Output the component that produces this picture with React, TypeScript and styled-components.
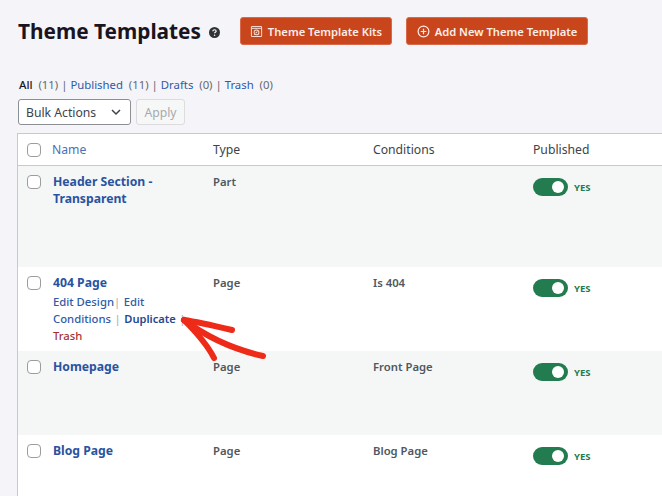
import React from 'react';
import styled, { createGlobalStyle } from 'styled-components';

const GlobalStyle = createGlobalStyle`
  html, body {
    margin: 0;
    padding: 0;
    overflow: hidden;
    background: #f5f4f8;
    font-family: "Noto Sans", "Open Sans", sans-serif;
  }
`;

const Page = styled.div`
  position: relative;
  width: 662px;
  height: 496px;
  overflow: hidden;
  padding-top: 17px;
  box-sizing: border-box;
`;

const Header = styled.div`
  display: flex;
  align-items: center;
  height: 28px;
  padding-left: 18px;
`;

const Title = styled.h1`
  margin: 0;
  width: 183px;
  white-space: nowrap;
  font-size: 20.8px;
  line-height: 28px;
  font-weight: 700;
  color: #1a1420;
`;

const Help = styled.svg`
  width: 11px;
  height: 11px;
  margin-left: 8px;
  margin-right: 20px;
  margin-top: 2px;
`;

const Button = styled.button<{ $width: number }>`
  display: flex;
  align-items: center;
  justify-content: center;
  gap: 5px;
  width: ${p => p.$width}px;
  height: 28px;
  margin-right: 14px;
  padding: 0;
  border: 1px solid #d9694a;
  border-radius: 3px;
  background: #c9451c;
  color: #fbeee9;
  font: 600 11.2px "Noto Sans", sans-serif;
  svg { width: 13px; height: 13px; flex: none; }
`;

const Filters = styled.div`
  display: flex;
  align-items: center;
  height: 18px;
  margin-top: 30px;
  padding-left: 19px;
  font-size: 11.35px;
  color: #646970;
  white-space: pre;
`;

const FilterLink = styled.span<{ $current?: boolean }>`
  color: ${p => (p.$current ? '#1a1420' : '#2f5aa8')};
  font-weight: ${p => (p.$current ? 500 : 400)};
`;

const Actions = styled.div`
  display: flex;
  gap: 5px;
  margin-top: 6px;
  padding-left: 18px;
`;

const BulkSelect = styled.div`
  display: flex;
  align-items: center;
  justify-content: space-between;
  box-sizing: border-box;
  width: 113px;
  height: 26px;
  padding: 0 8px 0 7px;
  background: #fff;
  border: 1px solid #8c8f94;
  border-radius: 3px;
  color: #3c434a;
  font-size: 12.2px;
  svg { width: 12px; height: 12px; }
`;

const Apply = styled.div`
  display: flex;
  align-items: center;
  justify-content: center;
  box-sizing: border-box;
  width: 49px;
  height: 26px;
  background: #f6f7f7;
  border: 1px solid #dcdcde;
  border-radius: 3px;
  color: #a7aaad;
  font-size: 12.2px;
`;

const Table = styled.div`
  margin-top: 8px;
  margin-left: 17px;
  width: 660px;
  background: #fff;
  border: 1px solid #c9c9cc;
  border-right: none;
`;

const Row = styled.div<{ $height: number; $tone?: 'head' | 'alt' | 'plain' }>`
  display: grid;
  grid-template-columns: 34px 161px 160px 160px 1fr;
  height: ${p => p.$height}px;
  box-sizing: border-box;
  background: ${p => (p.$tone === 'alt' ? '#f5f7f7' : '#fff')};
  border-bottom: ${p => (p.$tone === 'head' ? '1px solid #c9c9cc' : 'none')};
`;

const Cell = styled.div<{ $head?: boolean }>`
  padding-top: 7px;
  font-size: 11.3px;
  line-height: 17px;
  color: #50575e;
  font-weight: 600;
  ${p => p.$head && 'font-size: 12.2px; font-weight: 400; color: #3c434a;'}
`;

const CheckCell = styled.div`
  padding-top: 9px;
  padding-left: 9px;
`;

const Check = styled.div`
  width: 14px;
  height: 14px;
  box-sizing: border-box;
  border: 1px solid #9a9ca1;
  border-radius: 4px;
  background: #fff;
`;

const HeadName = styled.span`
  color: #4a6fb5;
  font-size: 12.2px;
`;

const NameCell = styled.div`
  padding: 7px 0 0 1px;
  box-sizing: border-box;
`;

const RowName = styled.div`
  width: 125px;
  font-size: 12.2px;
  line-height: 17px;
  font-weight: 700;
  color: #2a52a0;
`;

const RowActions = styled.div`
  margin-top: 2px;
  font-size: 11.3px;
  line-height: 17px;
  font-weight: 500;
  color: #2f5aa8;
`;

const ActionLine = styled.div`
  display: flex;
  gap: 3.5px;
  white-space: nowrap;
`;

const Sep = styled.span<{ $tight?: boolean }>`
  color: #a7aaad;
  font-weight: 400;
  margin-left: ${p => (p.$tight ? -3.5 : 0)}px;
`;

const Danger = styled.span`
  color: #a83232;
`;

const Dark = styled.span`
  color: #24488f;
  font-size: 11.1px;
  font-weight: 600;
`;

const ToggleCell = styled.div`
  display: flex;
  align-items: flex-start;
  gap: 6px;
  padding-top: 12px;
`;

const Toggle = styled.div`
  display: flex;
  justify-content: flex-end;
  align-items: center;
  box-sizing: border-box;
  width: 35px;
  height: 18px;
  padding-right: 4px;
  background: #237c4f;
  border-radius: 9px;
  &::after {
    content: '';
    width: 12px;
    height: 12px;
    border-radius: 50%;
    background: #fff;
  }
`;

const Yes = styled.span`
  font-size: 9.5px;
  line-height: 19px;
  font-weight: 700;
  color: #237c4f;
`;

const Arrow = styled.svg`
  position: absolute;
  left: 170px;
  top: 305px;
  width: 110px;
  height: 70px;
`;

const rows = [
  { name: 'Header Section - Transparent', type: 'Part', cond: '', h: 101, tone: 'alt' as const },
  { name: '404 Page', type: 'Page', cond: 'Is 404', h: 84, tone: 'plain' as const, actions: true },
  { name: 'Homepage', type: 'Page', cond: 'Front Page', h: 84, tone: 'alt' as const },
  { name: 'Blog Page', type: 'Page', cond: 'Blog Page', h: 84, tone: 'plain' as const },
];

export default function App() {
  return (
    <Page>
      <GlobalStyle />
      <Header>
        <Title>Theme Templates</Title>
        <Help viewBox="0 0 12 12">
          <circle cx="6" cy="6" r="6" fill="#2f3338" />
          <path d="M4.2 4.6c0-1 .8-1.6 1.8-1.6s1.8.6 1.8 1.5c0 1.2-1.7 1.2-1.7 2.4" fill="none" stroke="#fff" strokeWidth="1.3" />
          <circle cx="6.1" cy="9" r=".8" fill="#fff" />
        </Help>
        <Button $width={152}>
          <svg viewBox="0 0 14 14" fill="none" stroke="#f6d9cf" strokeWidth="1.1">
            <rect x="1.5" y="1.5" width="11" height="11" rx="1" />
            <path d="M1.5 3.6h11" />
            <circle cx="7" cy="8" r="2.6" />
            <path d="M6 9l2-2" />
          </svg>
          Theme Template Kits
        </Button>
        <Button $width={182}>
          <svg viewBox="0 0 14 14" fill="none" stroke="#fbeee9" strokeWidth="1.3">
            <circle cx="7" cy="7" r="5.8" />
            <path d="M7 4v6M4 7h6" />
          </svg>
          Add New Theme Template
        </Button>
      </Header>

      <Filters>
        <FilterLink $current>All</FilterLink>{'  (11) | '}
        <FilterLink>Published</FilterLink>{'  (11) | '}
        <FilterLink>Drafts</FilterLink>{'  (0) | '}
        <FilterLink>Trash</FilterLink>{'  (0)'}
      </Filters>

      <Actions>
        <BulkSelect>
          Bulk Actions
          <svg viewBox="0 0 12 12" fill="none" stroke="#3c434a" strokeWidth="1.5">
            <path d="M2 4l4 4 4-4" />
          </svg>
        </BulkSelect>
        <Apply>Apply</Apply>
      </Actions>

      <Table>
        <Row $height={32} $tone="head">
          <CheckCell><Check /></CheckCell>
          <Cell $head><HeadName>Name</HeadName></Cell>
          <Cell $head>Type</Cell>
          <Cell $head>Conditions</Cell>
          <Cell $head>Published</Cell>
        </Row>
        {rows.map(r => (
          <Row key={r.name} $height={r.h} $tone={r.tone}>
            <CheckCell><Check /></CheckCell>
            <NameCell>
              <RowName>{r.name}</RowName>
              {r.actions && (
                <RowActions>
                  <ActionLine>
                    <span>Edit Design</span>
                    <Sep $tight>|</Sep>
                    <span>Edit</span>
                  </ActionLine>
                  <ActionLine>
                    <span>Conditions</span>
                    <Sep>|</Sep>
                    <Dark>Duplicate</Dark>
                    <Sep>|</Sep>
                  </ActionLine>
                  <ActionLine>
                    <Danger>Trash</Danger>
                  </ActionLine>
                </RowActions>
              )}
            </NameCell>
            <Cell>{r.type}</Cell>
            <Cell>{r.cond}</Cell>
            <ToggleCell>
              <Toggle />
              <Yes>YES</Yes>
            </ToggleCell>
          </Row>
        ))}
      </Table>

      <Arrow viewBox="170 305 110 70" fill="none" stroke="#ee2a18" strokeWidth="6" strokeLinecap="round" strokeLinejoin="round">
        <path d="M232 330C215 326 198 322 184 320" />
        <path d="M263 356C232 349 208 338 184 320" />
        <path d="M214 358C208 346 196 332 184 320" />
      </Arrow>
    </Page>
  );
}
